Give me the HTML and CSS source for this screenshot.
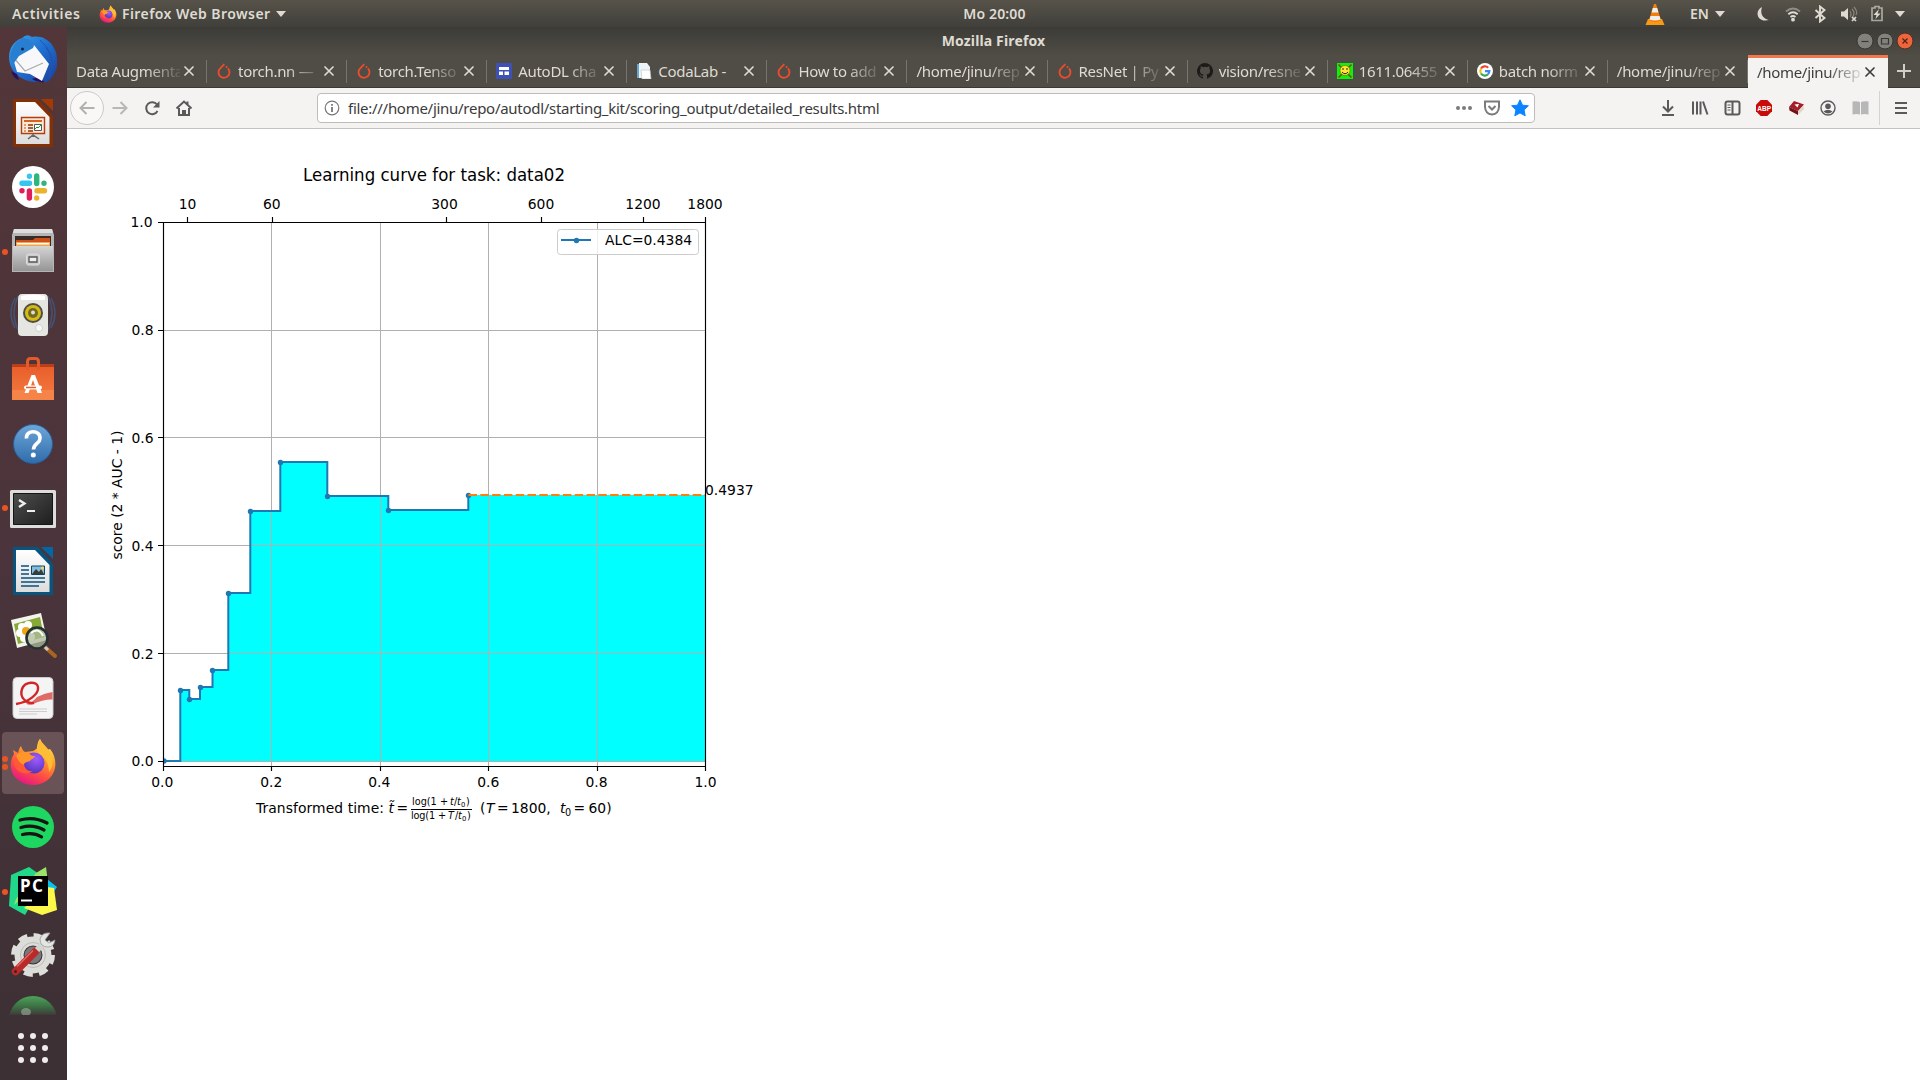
FILE: index.html
```html
<!DOCTYPE html>
<html lang="en">
<head>
<meta charset="utf-8">
<title>Mozilla Firefox</title>
<link rel="stylesheet" href="styles.css">
</head>
<body>
<svg class="defs" width="0" height="0">
  <defs>
    <linearGradient id="ffA" x1=".8" y1="0" x2=".3" y2="1"><stop offset="0" stop-color="#fff44f"/><stop offset=".35" stop-color="#ffa02a"/><stop offset=".7" stop-color="#ff4a45"/><stop offset="1" stop-color="#e31587"/></linearGradient>
    <radialGradient id="ffB" cx=".6" cy=".3" r=".8"><stop offset="0" stop-color="#a05cff"/><stop offset="1" stop-color="#4b2fb5"/></radialGradient>
    <linearGradient id="tb" x1="0" y1="0" x2="1" y2="1"><stop offset="0" stop-color="#3fa4e8"/><stop offset=".5" stop-color="#1f6fd0"/><stop offset="1" stop-color="#1c3d96"/></linearGradient>
    <linearGradient id="paper" x1="0" y1="0" x2="0" y2="1"><stop offset="0" stop-color="#fff"/><stop offset="1" stop-color="#dcdcdc"/></linearGradient>
    <linearGradient id="grey" x1="0" y1="0" x2="0" y2="1"><stop offset="0" stop-color="#d5d5d5"/><stop offset="1" stop-color="#959595"/></linearGradient>
    <linearGradient id="bag" x1="0" y1="0" x2="0" y2="1"><stop offset="0" stop-color="#e95f2b"/><stop offset="1" stop-color="#f37b40"/></linearGradient>
    <linearGradient id="help" x1="0" y1="0" x2="0" y2="1"><stop offset="0" stop-color="#6ea6d8"/><stop offset="1" stop-color="#2f6cab"/></linearGradient>
    <linearGradient id="screen" x1="0" y1="0" x2="1" y2="1"><stop offset="0" stop-color="#4e4e4e"/><stop offset="1" stop-color="#1e1e1e"/></linearGradient>
    <linearGradient id="orb" x1="0" y1="0" x2="0" y2="1"><stop offset="0" stop-color="#4da35a"/><stop offset=".22" stop-color="#3c7044"/><stop offset=".43" stop-color="#403036"/></linearGradient>
    <symbol id="firefox" viewBox="0 0 48 48">
      <path fill="url(#ffA)" d="M31 1c2 5 5 7 7 11l3-1c5 6 6 13 5 19-2 10-11 17-22 17S3 40 2 30C1 24 3 19 5 16l-1-4 5 3c1-3 1-5 3-7 1 3 2 5 4 6l8-1 5-3c-1-3 0-7 2-9z"/>
      <path fill="#ffbd35" d="M31 1c2 5 8 8 11 15 3 6 2 13-2 18 0-8-3-14-10-18-4-3-2-10 1-15z"/>
      <circle cx="25" cy="25" r="10.5" fill="url(#ffB)"/>
      <path fill="#ff9629" d="M7 18c4-5 10-5 14-2 1 2 3 2 5 2-1 3-4 3-5 5-2 1-6 1-6 4-4-1-7-5-8-9z"/>
      <path fill="#ff5938" d="M7 18c2 5 5 8 8 9 1 4 5 7 9 6-6 5-17 2-19-7z"/>
    </symbol>
    <symbol id="flame" viewBox="0 0 16 16"><path d="M8.300 1.200 4.200 5.300a5.500 5.500 0 1 0 7.700.1" fill="none" stroke="#ee4c2c" stroke-width="1.800"/><circle cx="10.500" cy="4" r="1" fill="#ee4c2c"/></symbol>
    <symbol id="close" viewBox="0 0 12 12"><path d="m2 2 8 8m0-8-8 8" fill="none" stroke="currentColor" stroke-width="1.7" stroke-linecap="round"/></symbol>
    <symbol id="caret" viewBox="0 0 10 6"><path d="M0 0h10L5 6z" fill="currentColor"/></symbol>
  </defs>
</svg>

<header class="panel">
  <div class="panel-left">
    <span class="activities">Activities</span>
    <svg class="app-icon" width="18" height="20"><use href="#firefox"/></svg>
    <span class="app-name">Firefox Web Browser</span>
    <svg width="10" height="6"><use href="#caret"/></svg>
  </div>
  <div class="clock">Mo 20:00</div>
  <div class="panel-right">
    <svg class="vlc" width="20" height="24" viewBox="0 0 20 24"><path d="M3 17h14l2.5 6H.5z" fill="#f99a12"/><path d="M9 2h2l5 16q-6 4-12 0z" fill="#f47d0a"/><path d="M7.8 6h4.4l1.3 4.5h-7zM5.5 14h9l1 3.5q-5.500 2-11 0z" fill="#eee"/></svg>
    <span class="lang">EN</span>
    <svg width="10" height="6"><use href="#caret"/></svg>
    <span class="status moon"><svg width="16" height="16" viewBox="0 0 16 16"><path d="M7 1C-1 5 2 17 14 14 7 12 5 7 7 1z" fill="currentColor"/></svg></span>
    <span class="status wifi"><svg width="16" height="16" viewBox="0 0 16 16" fill="none" stroke="currentColor" stroke-width="1.8"><path d="M1 5.500q7-6 14 0" opacity=".45"/><path d="M3.300 8.300q4.700-4 9.400 0M5.500 11q2.500-2 5 0"/><circle cx="8" cy="13.700" r="1" fill="currentColor"/></svg></span>
    <span class="status bt"><svg width="16" height="18" viewBox="0 0 16 18"><path d="m3.500 5 9 8L8 16.500v-15L12.500 5l-9 8" fill="none" stroke="currentColor" stroke-width="1.900"/></svg></span>
    <span class="status vol"><svg width="18" height="16" viewBox="0 0 18 16"><path d="M1 5.500h3L8 2v12l-4-3.500H1z" fill="currentColor"/><path d="M10 5q2 3 0 6m2-8q4 4 0 9m2-11q4 4 2 8" fill="none" stroke="currentColor" opacity=".4" stroke-width="1.200"/><path d="m12 11 4 4m0-4-4 4" stroke="currentColor" stroke-width="1.700"/></svg></span>
    <span class="status bat"><svg width="14" height="17" viewBox="0 0 14 17"><path d="M2 3h3V1.500h4V3h3v12.500H2z" fill="none" stroke="currentColor" stroke-width="1.700" opacity=".65"/><path d="M9 4 3.500 10h3L5.500 14l5-5.500h-3z" fill="currentColor"/></svg></span>
    <span class="status end"><svg width="10" height="6"><use href="#caret"/></svg></span>
  </div>
</header>

<div class="desktop">
  <nav class="dock">
    <div class="launcher"><svg viewBox="0 0 64 64"><path d="M21 11Q26 6 31 10C47 7 58 22 56 38c-1 8-5 14-10 17H34C19 54 8 44 8 30c0-9 5-16 13-19z" fill="url(#tb)"/><path d="M10 44q2 7 8 9l-2-6zM31 52q6 4 12 3l-3-6z" fill="#28105c"/><path d="M12 31 33 18l15 19-7 17-12-7-13-2z" fill="#f8f8fa"/><path d="m13 31 11 13 18-8" fill="none" stroke="#aaa" stroke-width="1.200"/><path d="M9 31Q10 17 21 11l6 1q8 4 5 9l-14 8-5 7z" fill="#287fd1"/><circle cx="21.500" cy="22" r="1.500" fill="#162447"/><path d="M45 20q10 14 3 31M39 13q15 13 12 31" stroke="#2452b3" fill="none"/></svg></div>
    <div class="launcher"><svg viewBox="0 0 64 64"><path d="M12 8h25l15 17v31H12z" fill="#823005"/><path d="M40 8h12v12z" fill="#a33a03"/><path d="M15 11h19l14.500 15v27H15z" fill="url(#paper)"/><path d="M20.500 26.500h23v16h-23z" fill="#fbe9dc" stroke="#b23e0a" stroke-width="1.400"/><path d="M23 29h18v2H23z" fill="#d9641e"/><path d="M27 34h5m-5 3h5m-5 3h5" stroke="#8b3205" stroke-width="1.500"/><path d="M23 34h2m-2 3h2m-2 3h2" stroke="#e0823f" stroke-width="1.500"/><path d="M33.500 33.500h7v6h-7z" fill="#fff" stroke="#555"/><path d="m34 38 2-2 1 1 3-3" stroke="#18a018" fill="none"/><path d="m27 48 5-4 6 4M32 43v3" stroke="#666" stroke-width="1.500" fill="none"/></svg></div>
    <div class="launcher"><svg viewBox="0 0 64 64"><circle cx="32" cy="32" r="21" fill="#fff"/><g stroke-width="5.400" stroke-linecap="round"><path d="M21 28.300h7.500M28.400 21.200h0" stroke="#36c5f0"/><path d="M35.700 21v7.500M43 28.300h0" stroke="#2eb67d"/><path d="M36 35.700h7.500M35.700 43h0" stroke="#ecb22e"/><path d="M28.400 36v7M21 35.700h0" stroke="#e01e5a"/></g></svg></div>
    <div class="launcher running"><svg viewBox="0 0 64 64"><path d="M13 10h38l2 6v37H11V16z" fill="#b5b5b5"/><path d="M13 10h38l1 4H12z" fill="#ddd"/><path d="M14 17h36v12H14z" fill="#3a2b24"/><path d="M15 21h17l2-2h15v10H15z" fill="#cf4f18"/><path d="M15 23h34v6H15z" fill="#f8a246"/><path d="M16 24h32v1.500H16z" fill="#fff"/><path d="M12 27h40v25H12z" fill="url(#grey)"/><rect x="25.500" y="35" width="13" height="11" rx="2" fill="#ccc" stroke="#ddd"/><path d="M28 38h8v5h-8z" fill="#eee" stroke="#555" stroke-width="1.300"/></svg></div>
    <div class="launcher"><svg viewBox="0 0 64 64"><path d="M14 15q-8 15 0 30m36-30q8 15 0 30M17 13q-8 17 0 34m30-34q8 17 0 34" stroke="#465071" stroke-width="1.500" fill="none"/><path d="M21 11h22q4 0 4 5v33q0 4-4 4H21q-4 0-4-4V16q0-5 4-5z" fill="#e5e5e1"/><path d="M20 13q12-3 24 0v4H20z" fill="#fff"/><circle cx="32" cy="30" r="10" fill="#4c4c48"/><circle cx="32" cy="30" r="8" fill="#d8ba15"/><circle cx="32" cy="30" r="5" fill="#726b1c"/><circle cx="32" cy="29.500" r="2" fill="#ddd"/><circle cx="38" cy="45" r="3.500" fill="#f8f8f8" stroke="#bbb" stroke-width=".6"/></svg></div>
    <div class="launcher"><svg viewBox="0 0 64 64"><path d="M11 17h42v10H11z" fill="#b83f1a"/><path d="M11 20h42v33H11z" fill="url(#bag)"/><path d="M11 43h42v10H11z" fill="#f68449"/><path d="M26.500 23v-8q0-3.500 3-3.500h5q3 0 3 3.500v8" fill="none" stroke="#e45a2b" stroke-width="3"/><path d="m23.500 46 7-18h3.500l7 18h-4.500L32 33l-4.500 13z" fill="#fff"/><rect x="23" y="38.500" width="18" height="4" rx="2" fill="#fff"/><path d="M25 40.500h10" stroke="#e95f2b" stroke-width="1.500"/></svg></div>
    <div class="launcher"><svg viewBox="0 0 64 64"><circle cx="32" cy="33" r="19.500" fill="url(#help)" stroke="#265d98"/><path d="M25.500 27.500c-1-9 14-9 13.500 0 0 5-6.500 5-6.500 11" fill="none" stroke="#fff" stroke-width="3.600"/><circle cx="32.300" cy="44" r="2.500" fill="#fff"/></svg></div>
    <div class="launcher running"><svg viewBox="0 0 64 64"><rect x="9" y="15" width="46" height="38" rx="1.500" fill="#ddd"/><path d="M12.500 18.500h39v31h-39z" fill="url(#screen)" stroke="#151515"/><path d="m18 25 5.500 3.500L18 32" fill="none" stroke="#eee" stroke-width="2.300"/><path d="M26 36h8" stroke="#eee" stroke-width="2"/></svg></div>
    <div class="launcher"><svg viewBox="0 0 64 64"><path d="M12 8h25l15 17v31H12z" fill="#075480"/><path d="M40 8h12v12z" fill="#0367a3"/><path d="M15 11h19l14.500 15v27H15z" fill="url(#paper)"/><path d="M20 27h8m-8 4h8m-8 4h8m-8 4h24m-24 4h24m-24 4h18" stroke="#06527d" stroke-width="1.700"/><path d="M30.500 27h13v8.500h-13z" fill="#82bde0" stroke="#06466b"/><path d="m31 35 4-5 3 3 2-3 3 5z" fill="#3c3c35"/><circle cx="41.500" cy="29" r="1.500" fill="#ffd34c"/></svg></div>
    <div class="launcher"><svg viewBox="0 0 64 64"><path d="m10 17 30-7 6 27-30 8z" fill="#f4f4ee"/><path d="m13 21 26-7 4 20-26 7z" fill="#86aa35"/><g fill="#fff"><circle cx="21" cy="24" r="4"/><circle cx="27" cy="22" r="4"/><circle cx="19" cy="30" r="4"/><circle cx="23" cy="35" r="4"/><circle cx="30" cy="34" r="4"/></g><circle cx="25" cy="28" r="4" fill="#eaa615"/><path d="m44 44 10 9" stroke="#a86420" stroke-width="4" stroke-linecap="round"/><path d="m44 44 3 3" stroke="#ccc" stroke-width="3"/><circle cx="36" cy="35" r="10.500" fill="#aeb99b" fill-opacity=".75" stroke="#253033" stroke-width="2.600"/><path d="M30 30q8-6 12 3" stroke="#fff" fill="none" stroke-width="2"/></svg></div>
    <div class="launcher"><svg viewBox="0 0 64 64"><rect x="12" y="10.500" width="40" height="41" rx="4" fill="#f4f4f4" stroke="#ccc"/><path d="M36 30q8-4 15.500-5v7.500Q43 32 31 37.500q-4 1-6-1 7-1 11-6.500z" fill="#e06a66"/><path d="M15 37c13-2 23-10 22-17-1-6-13-6-16 2-3 9 5 15 12 14" fill="none" stroke="#d12627" stroke-width="2.400"/><path d="M18 42h28m-28 2.500h28M18 47h18" stroke="#ccc"/></svg></div>
    <div class="launcher running double active"><svg viewBox="0 0 64 64"><use href="#firefox" x="8" y="7" width="48" height="48"/></svg></div>
    <div class="launcher"><svg viewBox="0 0 64 64"><circle cx="32" cy="32" r="21" fill="#1ed760"/><path d="M19 25q14-4 27 3M20 32.500q12-3.500 23 2.500M21.500 39.500q11-2.500 19 2.300" stroke="#191414" fill="none" stroke-width="3.300" stroke-linecap="round"/></svg></div>
    <div class="launcher running"><svg viewBox="0 0 64 64"><path d="m10 16 18-8 17 12-21 36-16-9z" fill="#21d789"/><path d="m45 8 2 16-14 5-20 17 2-6L35 14z" fill="#9be368"/><path d="m46 20 10 8-8 12z" fill="#07c3f2"/><path d="m46 28 7 1 3 22-15 5-18-7z" fill="#fcf84a"/><path d="M17 17h30v30H17z"/><path d="M20 41.500h11" stroke="#fff" stroke-width="2"/><text x="19" y="33" class="pc" textLength="23">PC</text></svg></div>
    <div class="launcher"><svg viewBox="0 0 64 64"><circle cx="32" cy="32" r="19.500" fill="none" stroke="#dedfdb" stroke-width="5" stroke-dasharray="9 6.320" /><circle cx="32" cy="32" r="14" fill="none" stroke="#dcdcd8" stroke-width="9"/><circle cx="32" cy="32" r="12.500" fill="none" stroke="#bbb"/><circle cx="32" cy="32" r="8.500" fill="#77787a"/><path d="m14.500 48.500 20-20" stroke="#b92a29" stroke-width="7.500" stroke-linecap="round"/><path d="m16 43.500 16-16" stroke="#e46862" stroke-width="1.500"/><path d="m36 27 9-9" stroke="#d2d5d2" stroke-width="6"/><path d="M49 10q-8-1-10 6 0 8 8 8 6 0 7-7l-6 3-4-3z" fill="#e4e6e3" stroke="#999" stroke-width=".8"/><circle cx="14.500" cy="48.500" r="1.500" fill="#431f20"/></svg></div>
    <div class="launcher clipped"><svg viewBox="0 0 64 64"><circle cx="32" cy="32" r="24" fill="url(#orb)"/><ellipse cx="25" cy="24" rx="5" ry="4" fill="#a8b7a5" opacity=".55"/></svg></div>
    <div class="show-apps"><i></i><i></i><i></i><i></i><i></i><i></i><i></i><i></i><i></i></div>
  </nav>

  <section class="window">
    <div class="titlebar">
      <h1 class="window-title">Mozilla Firefox</h1>
      <div class="window-buttons">
        <svg viewBox="0 0 18 18"><circle cx="9" cy="9" r="8" fill="#83817b" stroke="#383733"/><path d="M5.500 9.500h7" stroke="#383733" stroke-width="1.200"/></svg>
        <svg viewBox="0 0 18 18"><circle cx="9" cy="9" r="8" fill="#83817b" stroke="#383733"/><path d="M5.500 6.500h7v5.500h-7z" fill="none" stroke="#383733" stroke-width="1.200"/></svg>
        <svg viewBox="0 0 18 18"><circle cx="9" cy="9" r="8" fill="#ed653c" stroke="#4c3025"/><path d="m6.500 6.500 5 5m0-5-5 5" stroke="#512714" stroke-width="1.300"/></svg>
      </div>
    </div>
    <div class="tabs">
      <div class="tab"><span class="label">Data Augmenta</span><svg class="x"><use href="#close"/></svg></div>
      <div class="tab"><svg class="fav"><use href="#flame"/></svg><span class="label">torch.nn —</span><svg class="x"><use href="#close"/></svg></div>
      <div class="tab"><svg class="fav"><use href="#flame"/></svg><span class="label">torch.Tenso</span><svg class="x"><use href="#close"/></svg></div>
      <div class="tab"><svg class="fav" viewBox="0 0 16 16"><path d="M0 0h16v16H0z" fill="#3f51b5"/><path d="M3 4h10v3H3zM3 8.500h4V12H3zM8.500 8.500H13V12H8.500z" fill="#fff"/></svg><span class="label">AutoDL cha</span><svg class="x"><use href="#close"/></svg></div>
      <div class="tab"><svg class="fav" viewBox="0 0 16 16"><path d="M1 1h9v14H1z" fill="#67a7d4"/><path d="M3 0h8l3 4v11H3z" fill="#eef3f6"/><path d="M5 7h9l1 9H6z" fill="#fff" stroke="#bbc8d0" stroke-width=".7"/></svg><span class="label full">CodaLab -</span><svg class="x"><use href="#close"/></svg></div>
      <div class="tab"><svg class="fav"><use href="#flame"/></svg><span class="label">How to add</span><svg class="x"><use href="#close"/></svg></div>
      <div class="tab"><span class="label">/home/jinu/rep</span><svg class="x"><use href="#close"/></svg></div>
      <div class="tab"><svg class="fav"><use href="#flame"/></svg><span class="label">ResNet | Py</span><svg class="x"><use href="#close"/></svg></div>
      <div class="tab"><svg class="fav" viewBox="0 0 16 16"><path fill="#1c1b1a" fill-rule="evenodd" d="M8 0a8 8 0 0 0-2.530 15.590c.4.070.550-.17.550-.38v-1.490c-2.230.49-2.700-.95-2.700-.95-.36-.92-.89-1.170-.89-1.170-.73-.5.060-.49.060-.49.8.060 1.230.83 1.230.83.72 1.220 1.870.87 2.330.66.070-.52.280-.87.510-1.070-1.780-.2-3.640-.89-3.640-3.950 0-.87.310-1.590.82-2.150-.08-.2-.36-1.020.08-2.120 0 0 .67-.21 2.200.82a7.600 7.600 0 0 1 4 0c1.530-1.040 2.200-.82 2.200-.82.440 1.100.160 1.920.080 2.120.51.560.82 1.270.82 2.150 0 3.070-1.870 3.750-3.650 3.950.29.250.54.730.54 1.480v2.200c0 .21.150.46.550.38A8 8 0 0 0 8 0z"/></svg><span class="label">vision/resne</span><svg class="x"><use href="#close"/></svg></div>
      <div class="tab"><svg class="fav" viewBox="0 0 16 16"><path d="M0 0h16v16H0z" fill="#0cf20c"/><path d="m1.500 1.500 13 13m0-13-13 13" stroke="#7c4710" stroke-width="1.500"/><circle cx="8" cy="7.500" r="5" fill="#fde733" stroke="#765c00" stroke-width=".6"/><path d="M6 5v2m4-2v2M5 9q3 3.500 6 0" stroke="#222" fill="none"/></svg><span class="label">1611.06455</span><svg class="x"><use href="#close"/></svg></div>
      <div class="tab"><svg class="fav" viewBox="0 0 16 16"><circle cx="8" cy="8" r="8" fill="#fff"/><g fill="none" stroke-width="2.100"><path d="M4 5.500a4.500 4.500 0 0 1 7.200-.7" stroke="#ea4335"/><path d="M4 5.500a5 5 0 0 0 0 5" stroke="#fbbc05"/><path d="M4 10.500a4.500 4.500 0 0 0 7 .8" stroke="#34a853"/><path d="M11 11.300a4.600 4.600 0 0 0 1.400-3.200H8" stroke="#4285f4"/></g></svg><span class="label">batch norm</span><svg class="x"><use href="#close"/></svg></div>
      <div class="tab"><span class="label">/home/jinu/rep</span><svg class="x"><use href="#close"/></svg></div>
      <div class="tab current"><span class="label">/home/jinu/rep</span><svg class="x"><use href="#close"/></svg></div>
      <div class="new-tab"><svg width="16" height="16" viewBox="0 0 16 16"><path d="M8 1v14M1 8h14" stroke="#d0cec8" stroke-width="2"/></svg></div>
    </div>
    <div class="toolbar">
      <span class="back"><svg width="16" height="16" viewBox="0 0 16 16"><path d="M15.500 8h-14m6-6-6 6 6 6" class="line"/></svg></span>
      <span class="tool forward"><svg width="16" height="16" viewBox="0 0 16 16"><path d="M.5 8h14m-6-6 6 6-6 6" class="line"/></svg></span>
      <span class="tool"><svg width="16" height="16" viewBox="0 0 16 16"><path d="M13 4.500A6 6 0 1 0 13.500 11" class="line"/><path d="M15.500 1v6.500H9z" fill="currentColor"/></svg></span>
      <span class="tool"><svg width="18" height="18" viewBox="0 0 18 18"><path d="m1.500 9.500 7.500-7 7.500 7M4 9v7h10V9M12.500 2.500v3" class="line"/><path d="M7 16v-5h4v5z" fill="currentColor"/></svg></span>
      <div class="urlbar">
        <svg width="16" height="16" viewBox="0 0 16 16"><circle cx="8" cy="8" r="6.800" fill="none" stroke="#777" stroke-width="1.200"/><path d="M8 7v5M8 4v1.700" stroke="#777" stroke-width="1.800"/></svg>
        <span class="url">file:///home/jinu/repo/autodl/starting_kit/scoring_output/detailed_results.html</span>
        <span class="page-actions">
          <svg viewBox="0 0 18 18" fill="#7b7b7b"><circle cx="3" cy="9" r="2"/><circle cx="9" cy="9" r="2"/><circle cx="15" cy="9" r="2"/></svg>
          <svg viewBox="0 0 18 18" fill="none" stroke="#7b7b7b" stroke-width="2"><path d="M2 2.500h14V8q-.5 7-7 7.500Q2.500 15 2 8z"/><path d="m5.500 7 3.500 3.500L12.500 7"/></svg>
          <svg viewBox="0 0 18 18"><path d="m9 .8 2.500 5.400 5.900.6-4.400 4 1.200 6-5.200-2.900L3.800 16.800l1.200-6-4.400-4 5.900-.6z" fill="#0a84ff" stroke="#0a84ff" stroke-linejoin="round"/></svg>
        </span>
      </div>
      <div class="extensions">
        <span class="tool"><svg width="16" height="16" viewBox="0 0 16 16"><path d="M8 0v11M3 6.500l5 5 5-5M2 15h12" class="line"/></svg></span>
        <span class="tool"><svg width="18" height="16" viewBox="0 0 18 16"><path d="M2 1.500v13m4-13v13m3.500-13v13m2.500-13 4.500 13" class="line"/></svg></span>
        <span class="tool"><svg width="17" height="16" viewBox="0 0 17 16"><rect x="1.500" y="1.500" width="14" height="13" rx="2" class="line"/><path d="M8.500 1.500v13" class="line"/><path d="M3.500 5h3m-3 2.500h3M3.500 10h3" stroke="currentColor" stroke-width="1.200"/></svg></span>
        <span class="tool"><svg width="16" height="16" viewBox="0 0 16 16"><path d="M4.700 0h6.600L16 4.700v6.600L11.300 16H4.700L0 11.300V4.700z" fill="#c90a0a"/><text x="1.200" y="10.700" class="abp" textLength="13.800" lengthAdjust="spacingAndGlyphs">ABP</text></svg></span>
        <span class="tool"><svg width="17" height="16" viewBox="0 0 17 16"><path d="m6 1 10 3.500-6 6.500L1 7z" fill="#a51d28"/><path d="m1 7 9 4v4L1.500 10.500z" fill="#721119"/><path d="m10 11.500 5.700-6v3.700L10 15z" fill="#e0d7c2"/><path d="m6.500 4.500 4.500-.5-1.500 3.500z" fill="#fff"/></svg></span>
        <span class="tool"><svg width="16" height="16" viewBox="0 0 16 16"><circle cx="8" cy="8" r="7" fill="none" stroke="currentColor" stroke-width="1.400"/><circle cx="8" cy="6.300" r="2.800" fill="currentColor"/><path d="M3.500 11.500q4.500-3.500 9 0-4.500 4-9 0z" fill="currentColor"/></svg></span>
        <span class="tool reader"><svg width="17" height="16" viewBox="0 0 17 16"><path d="M.5 1.500q4-.5 7.500.5v12.500q-3.500-1-7.500 0zM9 2q3.500-1 7.500-.5v13q-4-1-7.500 0z" fill="#b7b7b7"/></svg></span>
      </div>
      <span class="tool menu"><svg width="14" height="14" viewBox="0 0 14 14"><path d="M1 2h12M1 7h12M1 12h12" class="line"/></svg></span>
    </div>
    <main class="page">
      <svg class="chart" viewBox="67 129 1853 951">
        <text x="434" y="181" class="title" textLength="262" lengthAdjust="spacingAndGlyphs">Learning curve for task: data02</text>
        <path class="area" d="M180.500 761.500V690h9v9h10.500v-12h12.500v-17h16v-77h22v-82h30v-49h47v34h61v14h80v-15H705v266.500z"/>
        <path class="grid" d="M271.500 222v544M380.500 222v544M488.500 222v544M597.500 222v544M163 330.500h542M163 437.500h542M163 545.500h542M163 653.500h542M163 761.500h542"/>
        <path class="curve" d="M163.500 761h16.800V690h9v9h10.700v-12h12.500v-17h15.800v-77h22v-82h30v-49h47v34h61v14h80v-15"/>
        <g class="points"><path d="M164 758.300a2.700 2.700 0 0 1 0 5.400z"/><circle cx="180.500" cy="690.500" r="2.700"/><circle cx="189.500" cy="699.500" r="2.700"/><circle cx="200.500" cy="687.500" r="2.700"/><circle cx="212.500" cy="670.500" r="2.700"/><circle cx="228.500" cy="593.500" r="2.700"/><circle cx="250.500" cy="511.500" r="2.700"/><circle cx="280.500" cy="462.500" r="2.700"/><circle cx="327.500" cy="496.500" r="2.700"/><circle cx="388.500" cy="510.500" r="2.700"/><circle cx="468.500" cy="495.500" r="2.700"/></g>
        <path class="last" d="M468.500 495H705"/>
        <path class="axis" d="M163.500 222.500h542v544h-542zM187.500 222v-5M272.500 222v-5M446.500 222v-5M541.500 222v-5M643.500 222v-5M705.500 222v-5M163 222.500h-5M163 330.500h-5M163 437.500h-5M163 545.500h-5M163 653.500h-5M163 761.500h-5M163.500 766v5M271.500 766v5M380.500 766v5M488.500 766v5M597.500 766v5M705.500 766v5"/>
        <g class="mid"><text x="187.500" y="209">10</text><text x="271.800" y="209">60</text><text x="444.500" y="209">300</text><text x="541" y="209">600</text><text x="643" y="209">1200</text><text x="705" y="209">1800</text></g>
        <g class="mid"><text x="162.300" y="787">0.0</text><text x="271.300" y="787">0.2</text><text x="379.300" y="787">0.4</text><text x="488.300" y="787">0.6</text><text x="596.500" y="787">0.8</text><text x="705.500" y="787">1.0</text></g>
        <g class="right"><text x="152.500" y="227">1.0</text><text x="153.500" y="335">0.8</text><text x="153.500" y="443">0.6</text><text x="153.500" y="551">0.4</text><text x="153.500" y="659">0.2</text><text x="153.500" y="766">0.0</text></g>
        <text class="mid" transform="translate(122 495) rotate(-90)" textLength="129">score (2 * AUC - 1)</text>
        <text x="705" y="495">0.4937</text>
        <rect x="557.500" y="229.500" width="141" height="25" rx="3" class="legend"/>
        <path d="M561 240h30" class="curve"/><circle cx="576.500" cy="240.500" r="2.700" class="points"/>
        <text x="605" y="245">ALC=0.4384</text>
        <text x="256" y="813" textLength="128">Transformed time:</text>
        <text x="388.500" y="813" class="var">t̃</text><text x="396.500" y="813">=</text>
        <path d="M411 809.500h61" class="axis"/>
        <g class="small"><text x="412" y="805" textLength="36">log(1 +</text><text x="450" y="805" class="var">t</text><text x="454" y="805">/</text><text x="457" y="805" class="var">t</text><text x="461" y="806.500" class="sub">0</text><text x="466" y="805">)</text>
        <text x="411" y="819" textLength="35">log(1 +</text><text x="448" y="819" class="var">T</text><text x="455" y="819">/</text><text x="458" y="819" class="var">t</text><text x="462" y="820.500" class="sub">0</text><text x="467" y="819">)</text></g>
        <text x="480" y="813">(</text><text x="486" y="813" class="var">T</text><text x="497" y="813">=</text><text x="511" y="813">1800,</text><text x="560" y="813" class="var">t</text><text x="565" y="815.500" class="small">0</text><text x="573.500" y="813">=</text><text x="588.500" y="813">60)</text>
      </svg>
    </main>
  </section>
</div>
</body>
</html>
```
FILE: styles.css
```css
* { box-sizing: border-box; }
body {
  margin: 0;
  width: 1920px;
  height: 1080px;
  overflow: hidden;
  display: flex;
  flex-direction: column;
  font: 15px "Noto Sans", sans-serif;
  background: #fff;
}
svg { display: block; flex: none; }
.defs { height: 0; }

/* Top panel */
.panel {
  height: 27px;
  flex: none;
  display: grid;
  grid-template-columns: 900px 189px 1fr;
  align-items: center;
  background: linear-gradient(#57534a, #403f3a);
  color: #dfdbd2;
  font-weight: 600;
  font-size: 14px;
  line-height: 26px;
  white-space: nowrap;
}
.panel-left { display: flex; align-items: center; padding-left: 12px; }
.activities { width: 87px; letter-spacing: .6px; }
.app-icon { margin-right: 5px; }
.app-name { width: 154px; letter-spacing: .43px; }
.clock { text-align: center; letter-spacing: .15px; }
.panel-right { display: flex; align-items: center; justify-content: flex-end; padding-right: 10px; }
.vlc { margin-right: 25px; }
.lang { width: 25px; }
.status { display: flex; justify-content: center; }
.moon { width: 32px; margin-left: 22px; }
.wifi { width: 28px; }
.bt { width: 26px; }
.vol { width: 31px; }
.bat { width: 26px; }
.end { width: 20px; }

/* Dock */
.desktop { flex: 1; min-height: 0; display: flex; }
.dock {
  width: 67px;
  flex: none;
  display: flex;
  flex-direction: column;
  background: linear-gradient(#523639, #4b343b 50%, #403136 85%, #3c3034);
}
.launcher {
  position: relative;
  width: 62px;
  height: 62px;
  margin: 1px 2px;
  flex: none;
  display: flex;
  align-items: center;
  justify-content: center;
  border-radius: 4px;
}
.launcher svg { width: 64px; height: 64px; }
.active { background: #695357; }
.running::before {
  content: "";
  position: absolute;
  left: 0;
  top: 29px;
  width: 6px;
  height: 6px;
  border-radius: 50%;
  background: #e95420;
}
.double::before { top: 24px; box-shadow: 0 8px #e95420; }
.clipped { height: 27px; align-items: flex-start; overflow: hidden; border-radius: 0; }
.pc { font: 700 17px "Noto Sans", sans-serif; fill: #fff; }
.show-apps {
  display: grid;
  grid-template-columns: repeat(3, 6px);
  gap: 6px;
  margin: 17px 0 0 18px;
}
.show-apps i { width: 6px; height: 6px; border-radius: 50%; background: #eeecec; }

/* Window frame */
.window { flex: 1; min-width: 0; display: flex; flex-direction: column; }
.titlebar {
  height: 28px;
  flex: none;
  display: grid;
  grid-template-columns: 1fr 60px;
  align-items: center;
  padding: 0 4px 1px 0;
  background: linear-gradient(#3c3b37, #4f4c45);
}
.window-title {
  margin: -1px -64px 0 0;
  text-align: center;
  color: #dfdbd2;
  font-size: 14px;
  font-weight: 700;
  letter-spacing: .15px;
}
.window-buttons { display: flex; gap: 2px; }
.window-buttons svg { width: 18px; height: 18px; }
.tabs {
  height: 33px;
  flex: none;
  display: flex;
  background: #504d46;
  border-bottom: 1px solid #393833;
}
.tab {
  position: relative;
  width: 140.080px;
  flex: none;
  display: flex;
  align-items: center;
  padding: 0 12px 0 9px;
  color: #dfdbd2;
}
.tab::after {
  content: "";
  position: absolute;
  right: 0;
  top: 5px;
  width: 1px;
  height: 23px;
  background: #77746d;
}
.fav { width: 16px; height: 16px; margin-right: 6px; }
.label {
  flex: 1;
  min-width: 0;
  white-space: nowrap;
  letter-spacing: -.3px;
  -webkit-mask-image: linear-gradient(90deg, #000 calc(100% - 34px), rgba(0, 0, 0, .12));
  mask-image: linear-gradient(90deg, #000 calc(100% - 34px), rgba(0, 0, 0, .12));
}
.full { -webkit-mask-image: none; mask-image: none; }
.x { width: 12px; height: 12px; margin-left: 3px; }
.current {
  height: 33px;
  background: #f4f3f2;
  border-top: 3px solid #f0784c;
  color: #3d3d3d;
  padding-bottom: 3px;
}
.tab.current::after { display: none; }
.new-tab { flex: 1; display: flex; align-items: center; justify-content: center; }

/* Navigation toolbar */
.toolbar {
  height: 41px;
  flex: none;
  display: flex;
  align-items: center;
  background: #f4f3f2;
  border-bottom: 1px solid #c5c3c0;
  color: #5a5a5a;
}
.line { fill: none; stroke: currentColor; stroke-width: 2; }
.back {
  width: 34px;
  height: 34px;
  margin: 0 0 0 3px;
  display: flex;
  align-items: center;
  justify-content: center;
  border: 1px solid #cbcac8;
  border-radius: 50%;
  color: #b2b1b0;
  background: #f9f8f7;
}
.tool { width: 32px; display: flex; justify-content: center; }
.forward { color: #b8b7b6; }
.urlbar {
  width: 1218px;
  height: 30px;
  margin-left: 117px;
  display: flex;
  align-items: center;
  padding: 0 5px 0 6px;
  background: #fff;
  border: 1px solid #bebcb9;
  border-radius: 4px;
}
.url { margin-left: 8px; color: #3b3b3b; white-space: nowrap; letter-spacing: -.28px; }
.page-actions { display: flex; gap: 10px; margin-left: auto; }
.page-actions svg { width: 18px; height: 18px; }
.extensions { display: flex; margin-left: 117px; padding-right: 3px; height: 34px; align-items: center; border-right: 1px solid #d5d3d1; }
.menu { margin-left: 5px; }
.abp { font: 700 7px "Liberation Sans", sans-serif; fill: #fff; }

/* Chart */
.page { flex: 1; min-height: 0; background: #fff; }
.chart { width: 1853px; height: 951px; font: 13.890px "DejaVu Sans", sans-serif; }
.title { font-size: 17.500px; text-anchor: middle; }
.mid { text-anchor: middle; }
.right { text-anchor: end; }
.area { fill: #0ff; }
.grid { fill: none; stroke: #b0b0b0; stroke-width: 1; }
.curve { fill: none; stroke: #1f77b4; stroke-width: 2; }
.points { fill: #1f77b4; }
.last { fill: none; stroke: #ff7f0e; stroke-width: 2; stroke-dasharray: 8.500 3.300; }
.axis { fill: none; stroke: #000; stroke-width: 1.150; }
.legend { fill: #fff; fill-opacity: .8; stroke: #ccc; }
.var { font-style: oblique; }
.small { font-size: 9.700px; }
.sub { font-size: 6.800px; }
```
